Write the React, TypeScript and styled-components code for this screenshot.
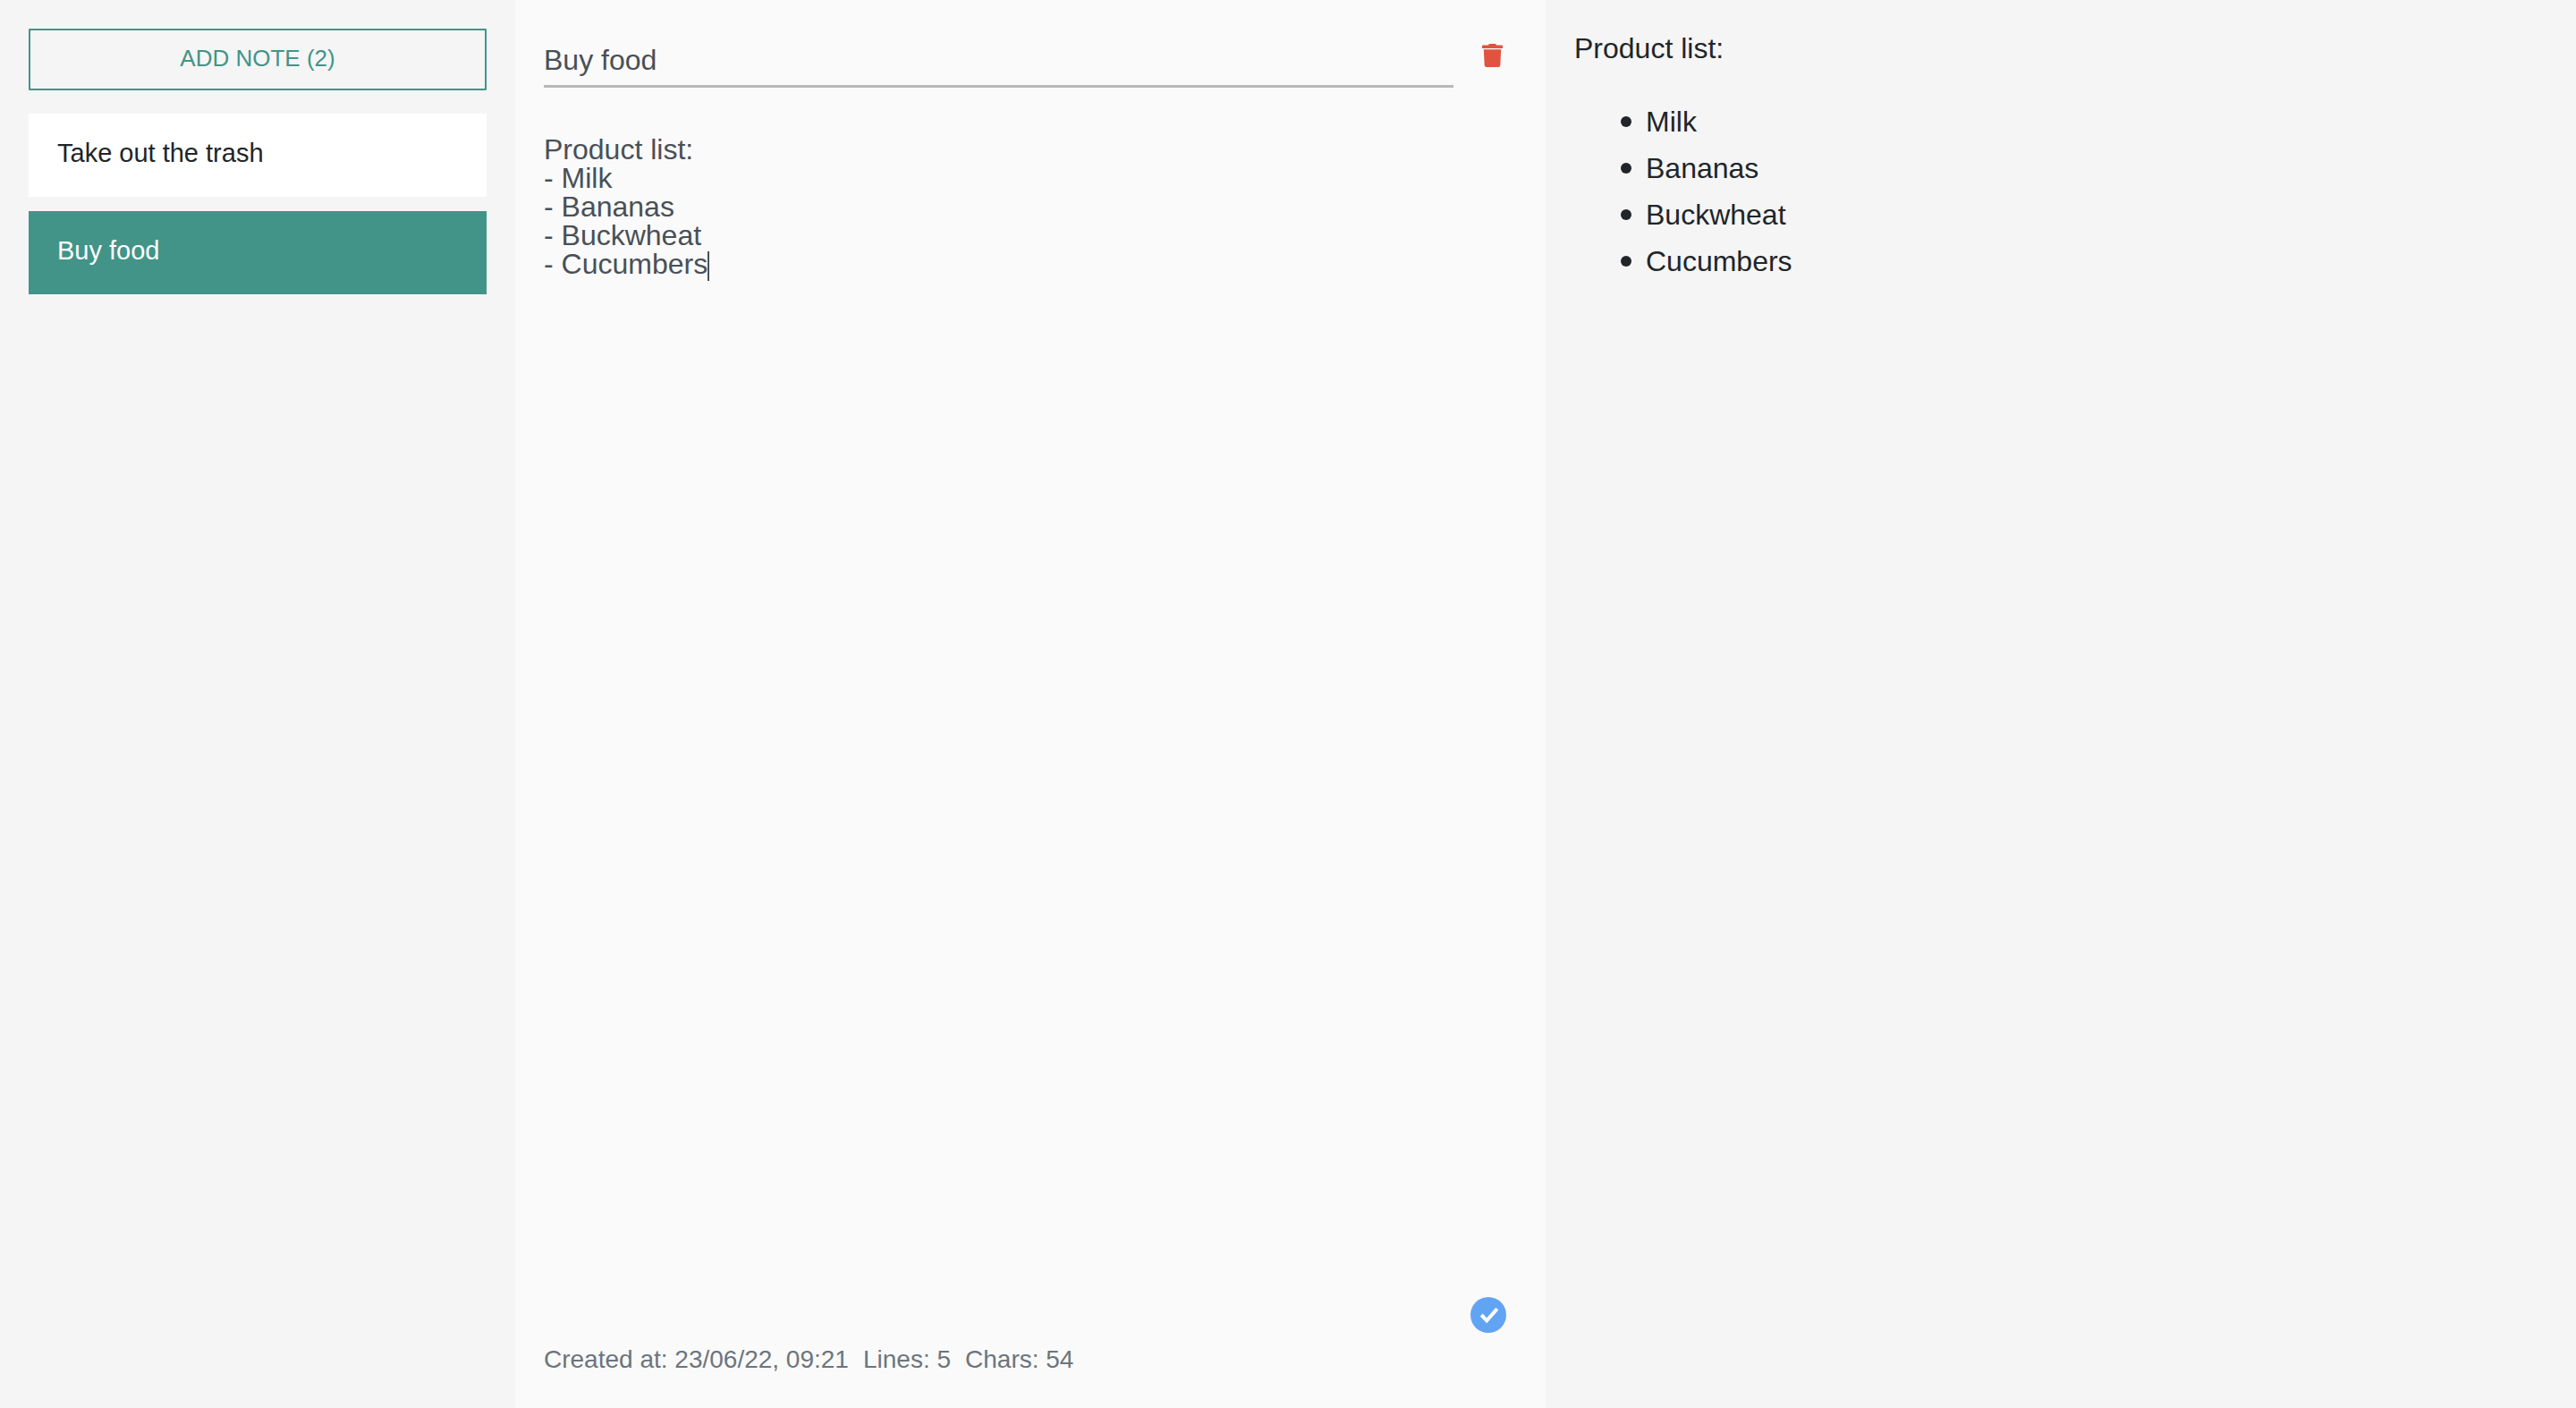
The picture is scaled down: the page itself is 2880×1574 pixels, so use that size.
import React, { useLayoutEffect, useRef, useState } from "react";
import styled, { createGlobalStyle } from "styled-components";

const FONT = '"Liberation Sans", Arial, Helvetica, sans-serif';

const GlobalStyle = createGlobalStyle`
  *, *::before, *::after { box-sizing: border-box; }
  body {
    margin: 0;
    background: #f5f5f5;
    color: #212529;
    font-family: ${FONT};
    font-size: 32px;
  }
  button, input, textarea { font-family: inherit; }
`;

const Page = styled.div`
  display: grid;
  grid-template-columns: 1fr 2fr 2fr;
  min-height: 100vh;
`;

const Sidebar = styled.aside`
  padding: 32px;
`;

const AddButton = styled.button`
  display: block;
  width: 100%;
  height: 69px;
  margin-bottom: 26px;
  padding: 0 32px 2px;
  border: 2px solid #429488;
  border-radius: 1px;
  background: transparent;
  color: #429488;
  font-size: 26px;
  text-transform: uppercase;
  cursor: pointer;
`;

const NoteList = styled.nav`
  display: flex;
  flex-direction: column;
  gap: 16px;
`;

const NoteItem = styled.button<{ $active: boolean }>`
  padding: 28px 32px 32px;
  border: 0;
  background: ${(p) => (p.$active ? "#429488" : "#ffffff")};
  color: ${(p) => (p.$active ? "#ffffff" : "#212529")};
  font-size: 29px;
  line-height: 33px;
  text-align: left;
  cursor: pointer;
`;

const Editor = styled.main`
  display: flex;
  flex-direction: column;
  padding: 32px;
  background: #fafafa;
`;

const TitleRow = styled.div`
  display: flex;
  align-items: center;
  gap: 32px;
  height: 66px;
`;

const TitleInput = styled.input`
  flex: 1;
  min-width: 0;
  height: 66px;
  padding: 8px 0 0;
  border: 0;
  border-bottom: 3px solid #b6b8b9;
  outline: 0;
  background: transparent;
  color: #495057;
  font-size: 32px;
`;

const DeleteButton = styled.button`
  display: flex;
  align-items: center;
  margin-right: 16px;
  padding: 0 0 6px;
  border: 0;
  background: transparent;
  color: #e2533f;
  cursor: pointer;
`;

const BodyWrap = styled.div`
  position: relative;
  display: flex;
  flex: 1;
  margin-top: 53px;
`;

const BodyInput = styled.textarea`
  flex: 1;
  padding: 0;
  border: 0;
  outline: 0;
  resize: none;
  background: transparent;
  color: #495057;
  caret-color: transparent;
  font-size: 32px;
  line-height: 32px;
`;

const Caret = styled.span`
  position: absolute;
  width: 2px;
  height: 33px;
  margin-top: 2px;
  background: #495057;
  pointer-events: none;
`;

const SavedRow = styled.div`
  display: flex;
  justify-content: flex-end;
  padding: 0 12px 10px 0;
`;

const Footer = styled.footer`
  display: flex;
  gap: 16px;
  padding-bottom: 2px;
  color: #6c757d;
  font-size: 28px;
  line-height: 40px;
`;

const Preview = styled.section`
  padding: 28px 32px;
  line-height: 52px;
`;

const Paragraph = styled.p`
  margin: 0 0 30px;
`;

const BulletList = styled.ul`
  margin: 0;
  padding-left: 52px;
  list-style: none;
`;

const BulletItem = styled.li`
  display: flex;
  align-items: center;
  gap: 16px;

  &::before {
    content: "";
    flex: none;
    width: 12px;
    height: 12px;
    border-radius: 50%;
    background: currentColor;
  }
`;

const TrashIcon = () => (
  <svg width="23" height="26" viewBox="0 0 23 26" fill="currentColor" aria-hidden="true">
    <path d="M8 0h7l1.200 1.600H22.300L23 2.200V5H0V2.200L.7 1.600H6.800z" />
    <path d="M1.800 6.300H21.200L20.300 24Q20.100 26 18.300 26H4.700Q2.900 26 2.700 24z" />
  </svg>
);

const SavedIcon = () => (
  <svg width="40" height="40" viewBox="0 0 40 40" role="img" aria-label="Saved">
    <circle cx="20" cy="20" r="20" fill="#62a4f4" />
    <path d="M12.200 20L18.200 26.300L29.800 13.200" fill="none" stroke="#ffffff" strokeWidth="4" />
  </svg>
);

type Note = { id: number; title: string; content: string; created: string };

const initialNotes: Note[] = [
  { id: 1, title: "Take out the trash", content: "", created: "23/06/22, 09:20" },
  {
    id: 2,
    title: "Buy food",
    content: "Product list:\n- Milk\n- Bananas\n- Buckwheat\n- Cucumbers",
    created: "23/06/22, 09:21",
  },
];

function useCaret(text: string) {
  const ref = useRef<HTMLTextAreaElement>(null);
  const [position, setPosition] = useState({ left: 0, top: 0 });
  useLayoutEffect(() => {
    const context = document.createElement("canvas").getContext("2d");
    if (!ref.current || !context) return;
    const style = getComputedStyle(ref.current);
    context.font = `${style.fontSize} ${style.fontFamily}`;
    const before = text.slice(0, ref.current.selectionEnd || text.length).split("\n");
    setPosition({
      left: Math.round(context.measureText(before[before.length - 1]).width),
      top: (before.length - 1) * parseInt(style.lineHeight, 10),
    });
  }, [text]);
  return { ref, position };
}

function renderMarkdown(text: string) {
  const lines = text.split("\n");
  const items = lines.filter((line) => line.startsWith("- "));
  const paragraph = lines.filter((line) => line && !line.startsWith("- ")).join(" ");
  return (
    <>
      {paragraph && <Paragraph>{paragraph}</Paragraph>}
      {items.length > 0 && (
        <BulletList>
          {items.map((item, i) => (
            <BulletItem key={i}>{item.slice(2)}</BulletItem>
          ))}
        </BulletList>
      )}
    </>
  );
}

export default function App() {
  const [notes, setNotes] = useState(initialNotes);
  const [selected, setSelected] = useState(2);
  const note = notes.find((n) => n.id === selected);
  const content = note?.content ?? "";
  const { ref, position } = useCaret(content);

  const update = (change: Partial<Note>) =>
    setNotes(notes.map((n) => (n.id === selected ? { ...n, ...change } : n)));

  const addNote = () => {
    const id = Date.now();
    setNotes([...notes, { id, title: "New note", content: "", created: new Date().toLocaleString() }]);
    setSelected(id);
  };

  return (
    <>
      <GlobalStyle />
      <Page>
        <Sidebar>
          <AddButton onClick={addNote}>Add note ({notes.length})</AddButton>
          <NoteList aria-label="Notes">
            {notes.map((n) => (
              <NoteItem key={n.id} $active={n.id === selected} onClick={() => setSelected(n.id)}>
                {n.title}
              </NoteItem>
            ))}
          </NoteList>
        </Sidebar>
        <Editor>
          {note && (
            <>
              <TitleRow>
                <TitleInput
                  aria-label="Note title"
                  value={note.title}
                  onChange={(e) => update({ title: e.target.value })}
                />
                <DeleteButton
                  aria-label="Delete note"
                  onClick={() => setNotes(notes.filter((n) => n.id !== selected))}
                >
                  <TrashIcon />
                </DeleteButton>
              </TitleRow>
              <BodyWrap>
                <BodyInput
                  ref={ref}
                  aria-label="Note content"
                  value={content}
                  onChange={(e) => update({ content: e.target.value })}
                />
                <Caret style={position} />
              </BodyWrap>
              <SavedRow>
                <SavedIcon />
              </SavedRow>
              <Footer>
                <span>Created at: {note.created}</span>
                <span>Lines: {content.split("\n").length}</span>
                <span>Chars: {content.length}</span>
              </Footer>
            </>
          )}
        </Editor>
        <Preview aria-label="Preview">{renderMarkdown(content)}</Preview>
      </Page>
    </>
  );
}
